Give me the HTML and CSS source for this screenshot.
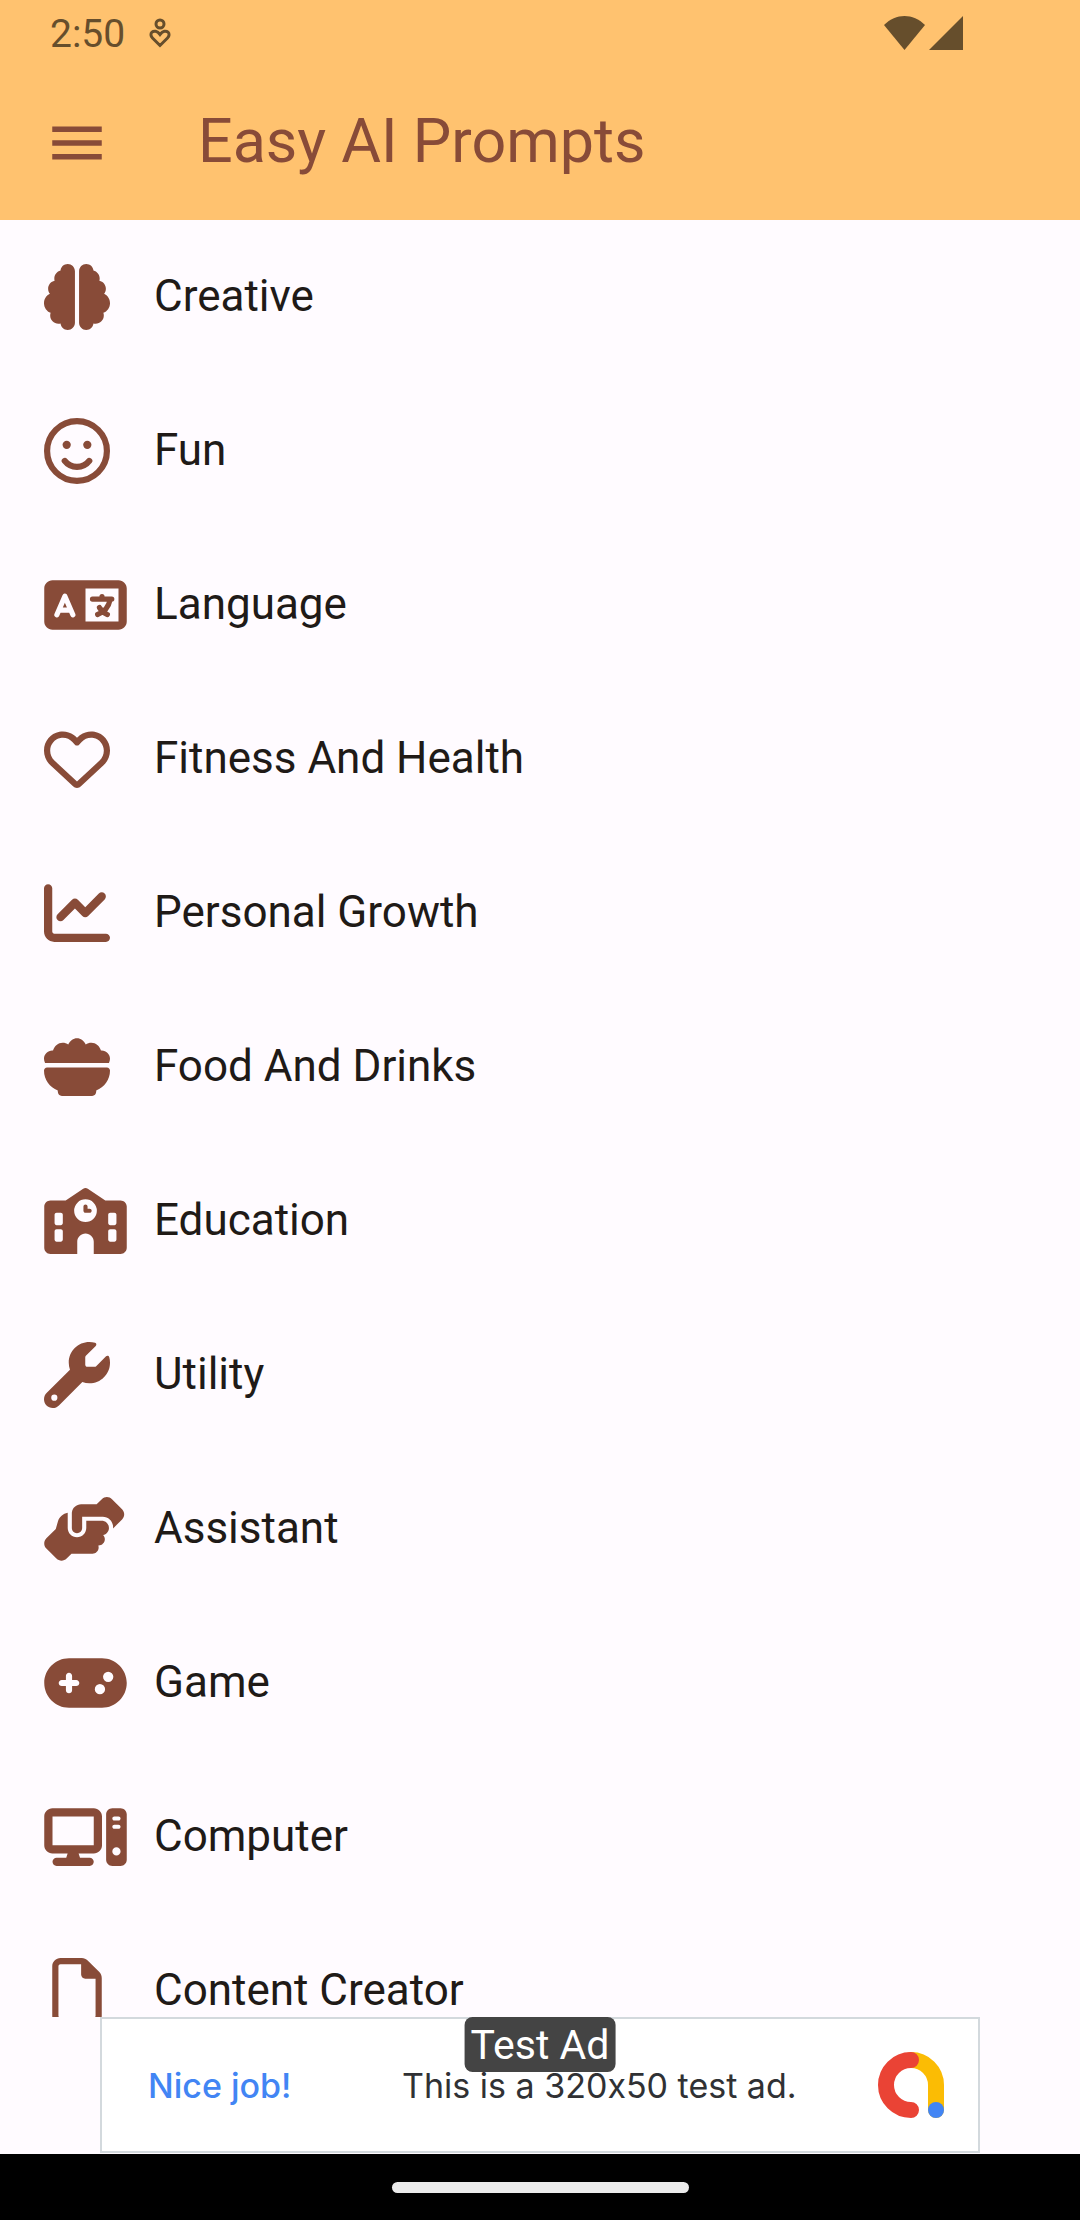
FILE: index.html
```
<!DOCTYPE html>
<html lang="en">
<head>
    <meta charset="UTF-8">
    <meta name="viewport" content="width=device-width, initial-scale=1.0">
    <title>Easy AI Prompts</title>
    <link rel="stylesheet" href="styles.css">
</head>
<body>

<header>
    <div class="status-bar">
        <span class="clock">2:50</span>
        <svg class="status-heart" viewBox="0 0 22 30" aria-hidden="true">
            <circle cx="11" cy="6" r="4"/>
            <path d="M11 27.500L3.500 20C1.500 18 1.500 15.500 3 14.200C5 12.500 8 12.800 11 16.500C14 12.800 17 12.500 19 14.200C20.500 15.500 20.500 18 18.500 20Z"/>
        </svg>
        <div class="signals">
            <svg class="wifi" viewBox="0 0 41 34" aria-hidden="true"><path d="M0 9C12-3 29-3 41 9L20.500 34Z"/></svg>
            <svg class="cell" viewBox="0 0 34 34" aria-hidden="true"><path d="M34 0V34H0Z"/></svg>
        </div>
    </div>
    <div class="app-bar">
        <button class="menu-button" type="button" aria-label="Open menu">
            <svg class="icon" viewBox="0 0 24 24"><path d="M3 18h18v-2H3v2zm0-5h18v-2H3v2zm0-7v2h18V6H3z"/></svg>
        </button>
        <h1>Easy AI Prompts</h1>
    </div>
</header>

<main>
    <ul class="category-list">
        <li><a href="#creative">
            <span class="leading"><svg class="icon" viewBox="0 0 512 512"><path d="M184 0c30.900 0 56 25.100 56 56V456c0 30.900-25.100 56-56 56c-28.900 0-52.700-21.900-55.700-50.100c-5.200 1.400-10.700 2.100-16.300 2.100c-35.300 0-64-28.700-64-64c0-7.400 1.300-14.600 3.600-21.200C21.400 367.400 0 338.200 0 304c0-31.900 18.700-59.500 45.800-72.300C37.100 220.800 32 207 32 192c0-30.700 21.600-56.300 50.400-62.600C80.800 123.900 80 118 80 112c0-29.900 20.600-55.100 48.300-62.100C131.300 21.900 155.100 0 184 0zM328 0c28.900 0 52.600 21.900 55.700 49.900c27.800 7 48.300 32.100 48.300 62.100c0 6-.8 11.900-2.400 17.400c28.800 6.200 50.400 31.900 50.400 62.600c0 15-5.100 28.800-13.800 39.700C493.300 244.500 512 272.100 512 304c0 34.200-21.400 63.400-51.600 74.800c2.300 6.600 3.600 13.800 3.600 21.200c0 35.300-28.700 64-64 64c-5.600 0-11.100-.7-16.300-2.100c-3 28.200-26.800 50.100-55.700 50.100c-30.900 0-56-25.100-56-56V56c0-30.900 25.100-56 56-56z"/></svg></span>
            <span class="label">Creative</span>
        </a></li>
        <li><a href="#fun">
            <span class="leading"><svg class="icon" viewBox="0 0 512 512">
                <circle class="line" cx="256" cy="256" r="232"/>
                <circle cx="176" cy="208" r="32"/>
                <circle cx="336" cy="208" r="32"/>
                <path class="line" d="M161 333c20 26 54 46 95 46s75-20 95-46"/>
            </svg></span>
            <span class="label">Fun</span>
        </a></li>
        <li><a href="#language">
            <span class="leading"><svg class="icon icon-wide" viewBox="0 0 640 512">
                <path fill-rule="evenodd" d="M64 64H576c35.300 0 64 28.700 64 64V384c0 35.300-28.700 64-64 64H64c-35.300 0-64-28.700-64-64V128c0-35.300 28.700-64 64-64zM320 128V384H576V128z"/>
                <path class="cutout" d="M98 332L160 188L222 332M122 296h76"/>
                <path class="line thin" d="M448 190v16M374 210h150M512 212c-10 50-42 98-98 118M428 276c14 24 34 42 62 54"/>
            </svg></span>
            <span class="label">Language</span>
        </a></li>
        <li><a href="#fitness-and-health">
            <span class="leading"><svg class="icon" viewBox="0 0 512 512"><path d="M225.800 468.200l-2.500-2.300L48.100 303.200C17.400 274.700 0 234.700 0 192.800v-3.300c0-70.400 50-130.800 119.200-144C158.600 37.900 198.900 47 231 69.600c9 6.400 17.400 13.800 25 22.300c4.200-4.800 8.700-9.200 13.500-13.300c3.700-3.200 7.500-6.200 11.500-9C313.100 47 353.400 37.900 392.800 45.400C462 58.600 512 119.100 512 189.500v3.300c0 41.900-17.400 81.900-48.100 110.400L288.700 465.900l-2.500 2.300c-8.200 7.600-19 11.900-30.200 11.900s-22-4.200-30.200-11.900zM239.100 145c-.4-.3-.7-.7-1-1.100l-17.900-20.100c-23.100-25.900-58-37.700-92-31.200C81.600 101.500 48 142.100 48 189.500v3.300c0 28.500 11.900 55.800 32.800 75.200L256 430.700 431.200 268c20.900-19.400 32.800-46.700 32.800-75.200v-3.300c0-47.300-33.600-88-80.100-96.900c-34-6.500-69 5.400-92 31.200l-18 20.200c-.3 .4-.7 .7-1 1.100c-4.500 4.500-10.600 7-16.900 7s-12.400-2.500-16.900-7z"/></svg></span>
            <span class="label">Fitness And Health</span>
        </a></li>
        <li><a href="#personal-growth">
            <span class="leading"><svg class="icon" viewBox="0 0 512 512"><path d="M64 64c0-17.700-14.300-32-32-32S0 46.300 0 64V400c0 44.200 35.800 80 80 80H480c17.700 0 32-14.300 32-32s-14.300-32-32-32H80c-8.800 0-16-7.200-16-16V64zm406.600 86.600c12.500-12.500 12.500-32.800 0-45.300s-32.800-12.500-45.300 0L320 210.700l-57.400-57.400c-12.500-12.500-32.800-12.500-45.300 0l-112 112c-12.500 12.500-12.500 32.800 0 45.300s32.800 12.500 45.300 0L240 221.300l57.400 57.400c12.500 12.500 32.800 12.500 45.300 0l128-128z"/></svg></span>
            <span class="label">Personal Growth</span>
        </a></li>
        <li><a href="#food-and-drinks">
            <span class="leading"><svg class="icon" viewBox="0 0 512 512">
                <path d="M0 192c0-35 29-64 64-64h6C80 94 111 68 144 68c18 0 32 5 44 13C201 53 227 32 256 32s55 21 68 49c12-8 26-13 44-13c33 0 64 26 74 60h6c35 0 64 29 64 64c0 11-3 22-8 32H8c-5-10-8-21-8-32z"/>
                <path d="M0 284c0-13 10-24 24-24H488c14 0 24 11 24 24c0 72-44 132-107 154v10c0 18-14 32-32 32H139c-18 0-32-14-32-32v-10C44 416 0 356 0 284z"/>
            </svg></span>
            <span class="label">Food And Drinks</span>
        </a></li>
        <li><a href="#education">
            <span class="leading"><svg class="icon icon-wide" viewBox="0 0 640 512"><path fill-rule="evenodd" d="M337.800 5.400C327-1.800 313-1.800 302.200 5.400L166.300 96H48C21.500 96 0 117.500 0 144V464c0 26.500 21.500 48 48 48H256V416c0-35.300 28.700-64 64-64s64 28.700 64 64v96H592c26.500 0 48-21.500 48-48V144c0-26.500-21.500-48-48-48H473.700L337.800 5.400zM96 192h32c8.800 0 16 7.200 16 16v64c0 8.800-7.200 16-16 16H96c-8.800 0-16-7.200-16-16V208c0-8.800 7.200-16 16-16zm400 16c0-8.800 7.200-16 16-16h32c8.800 0 16 7.200 16 16v64c0 8.800-7.200 16-16 16H512c-8.800 0-16-7.200-16-16V208zM96 320h32c8.800 0 16 7.200 16 16v64c0 8.800-7.200 16-16 16H96c-8.800 0-16-7.200-16-16V336c0-8.800 7.200-16 16-16zm400 16c0-8.800 7.200-16 16-16h32c8.800 0 16 7.200 16 16v64c0 8.800-7.200 16-16 16H512c-8.800 0-16-7.200-16-16V336zM232 176a88 88 0 1 1 176 0 88 88 0 1 1 -176 0zm88-48c-8.800 0-16 7.200-16 16v32c0 8.800 7.200 16 16 16h32c8.800 0 16-7.200 16-16s-7.200-16-16-16H336V144c0-8.800-7.200-16-16-16z"/></svg></span>
            <span class="label">Education</span>
        </a></li>
        <li><a href="#utility">
            <span class="leading"><svg class="icon" viewBox="0 0 512 512"><path fill-rule="evenodd" d="M352 320c88.400 0 160-71.600 160-160c0-15.300-2.200-30.100-6.200-44.200c-3.100-10.800-16.400-13.200-24.300-5.300l-76.800 76.800c-3 3-7.100 4.700-11.300 4.700H336c-8.800 0-16-7.200-16-16V118.600c0-4.200 1.700-8.300 4.700-11.300l76.800-76.800c7.900-7.900 5.400-21.200-5.300-24.300C382.100 2.200 367.300 0 352 0C263.600 0 192 71.600 192 160c0 19.100 3.400 37.500 9.500 54.500L19.900 396.100C7.200 408.800 0 426.100 0 444.100C0 481.600 30.400 512 67.900 512c18 0 35.300-7.200 48-19.900L297.500 310.500c17 6.200 35.400 9.500 54.500 9.500zM80 408a24 24 0 1 1 0 48 24 24 0 1 1 0-48z"/></svg></span>
            <span class="label">Utility</span>
        </a></li>
        <li><a href="#assistant">
            <span class="leading"><svg class="icon icon-wide" viewBox="10 0 640 512"><path d="M544 248v3.300l69.700-69.700c21.900-21.900 21.900-57.300 0-79.200L535.600 24.400c-21.900-21.900-57.300-21.900-79.200 0L416.300 64.500c-2.700-.3-5.500-.5-8.300-.5H296c-37.100 0-67.600 28-71.600 64H224V248c0 22.100 17.900 40 40 40s40-17.900 40-40V160H464c44.200 0 80 35.800 80 80v8zM336 192v56c0 39.800-32.200 72-72 72s-72-32.200-72-72V129.400c-35.900 6.200-65.800 32.300-76 68.200L99.500 255.200 26.300 328.400c-21.900 21.900-21.900 57.300 0 79.200l78.100 78.100c21.900 21.900 57.300 21.900 79.200 0l37.700-37.700c.9 0 1.800 .1 2.700 .1H384c26.500 0 48-21.500 48-48c0-5.600-1-11-2.700-16H432c26.500 0 48-21.500 48-48c0-12.800-5-24.400-13.200-33c25.700-5 45.100-27.600 45.200-54.800v-.4c-.1-30.800-25.100-55.800-56-55.800l-120 0z"/></svg></span>
            <span class="label">Assistant</span>
        </a></li>
        <li><a href="#game">
            <span class="leading"><svg class="icon icon-wide" viewBox="0 0 640 512"><path fill-rule="evenodd" d="M192 64C86 64 0 150 0 256S86 448 192 448H448c106 0 192-86 192-192s-86-192-192-192H192zM496 168a40 40 0 1 1 0 80 40 40 0 1 1 0-80zM392 304a40 40 0 1 1 80 0 40 40 0 1 1 -80 0zM168 200c0-13.300 10.700-24 24-24s24 10.700 24 24v32h32c13.300 0 24 10.700 24 24s-10.700 24-24 24H216v32c0 13.300-10.700 24-24 24s-24-10.700-24-24V280H136c-13.300 0-24-10.700-24-24s10.700-24 24-24h32V200z"/></svg></span>
            <span class="label">Game</span>
        </a></li>
        <li><a href="#computer">
            <span class="leading"><svg class="icon icon-wide" viewBox="0 0 640 512"><path fill-rule="evenodd" d="M384 96V320H64L64 96H384zM64 32C28.700 32 0 60.700 0 96V320c0 35.300 28.700 64 64 64H181.300l-10.700 32H96c-17.700 0-32 14.300-32 32s14.300 32 32 32H352c17.700 0 32-14.300 32-32s-14.300-32-32-32H277.300l-10.700-32H384c35.300 0 64-28.700 64-64V96c0-35.300-28.700-64-64-64H64zm464 0c-26.500 0-48 21.500-48 48V432c0 26.500 21.500 48 48 48h64c26.500 0 48-21.500 48-48V80c0-26.500-21.500-48-48-48H528zm16 64h32c8.800 0 16 7.200 16 16s-7.200 16-16 16H544c-8.800 0-16-7.200-16-16s7.200-16 16-16zm-16 80c0-8.800 7.200-16 16-16h32c8.800 0 16 7.200 16 16s-7.200 16-16 16H544c-8.800 0-16-7.200-16-16zm32 160a32 32 0 1 1 0 64 32 32 0 1 1 0-64z"/></svg></span>
            <span class="label">Computer</span>
        </a></li>
        <li><a href="#content-creator">
            <span class="leading"><svg class="icon" viewBox="0 0 384 512"><path fill-rule="evenodd" d="M320 464c8.800 0 16-7.200 16-16V160H256c-17.700 0-32-14.300-32-32V48H64c-8.800 0-16 7.200-16 16V448c0 8.800 7.200 16 16 16H320zM0 64C0 28.700 28.700 0 64 0H229.500c17 0 33.300 6.700 45.300 18.700l90.500 90.500c12 12 18.700 28.300 18.700 45.300V448c0 35.300-28.700 64-64 64H64c-35.300 0-64-28.700-64-64V64z"/></svg></span>
            <span class="label">Content Creator</span>
        </a></li>
    </ul>
</main>

<footer>
    <a class="ad-banner" href="#ad">
        <span class="ad-badge">Test Ad</span>
        <span class="ad-praise">Nice job!</span>
        <span class="ad-text">This is a 320x50 test ad.</span>
        <svg class="ad-logo" viewBox="0 0 66 66" aria-hidden="true">
            <path class="yellow" d="M33 8A25 25 0 0 1 58 33V58"/>
            <path class="red" d="M33 8A25 25 0 0 0 33 58"/>
            <circle cx="58" cy="58" r="8"/>
        </svg>
    </a>
    <div class="gesture-bar"><div class="pill"></div></div>
</footer>

</body>
</html>
```

FILE: styles.css
```
* {
    box-sizing: border-box;
}
body {
    font-family: Roboto, sans-serif;
    margin: 0;
    height: 100vh;
    display: flex;
    flex-direction: column;
    background-color: #fffbff;
    color: #201a17;
}
header {
    background-color: #ffc26f;
}

/* status bar */
.status-bar {
    height: 66px;
    padding: 0 117px 0 50px;
    display: flex;
    align-items: center;
    color: #664e2c;
}
.clock {
    padding-top: 2px;
    font-size: 39px;
}
.status-heart {
    width: 22px;
    height: 30px;
    margin-left: 24px;
    fill: none;
    stroke: currentColor;
    stroke-width: 3;
}
.signals {
    margin-left: auto;
    display: flex;
    gap: 4px;
}
.signals svg {
    height: 34px;
    fill: currentColor;
}
.wifi {
    width: 41px;
}
.cell {
    width: 34px;
}

/* app bar */
.app-bar {
    height: 154px;
    padding: 0 44px;
    display: flex;
    align-items: center;
    gap: 88px;
    color: #884b38;
}
.menu-button {
    padding: 0;
    border: none;
    background: none;
    color: inherit;
    cursor: pointer;
}
h1 {
    margin: 0;
    padding-bottom: 4px;
    font-size: 61px;
    font-weight: 400;
}
.icon {
    display: block;
    width: 66px;
    height: 66px;
    fill: currentColor;
}
.icon-wide {
    width: 83px;
}

/* category list */
main {
    flex: 1;
    min-height: 0;
    overflow: hidden;
}
.category-list {
    list-style: none;
    margin: 0;
    padding: 0;
}
.category-list a {
    display: flex;
    align-items: center;
    height: 154px;
    padding: 0 44px;
    font-size: 44px;
    color: inherit;
    text-decoration: none;
}
.leading {
    width: 110px;
    color: #884b38;
}
.label {
    padding-bottom: 2px;
}
.line {
    fill: none;
    stroke: currentColor;
    stroke-width: 48;
    stroke-linecap: round;
    stroke-linejoin: round;
}
.thin {
    stroke-width: 40;
}
.cutout {
    fill: none;
    stroke: #fffbff;
    stroke-width: 40;
    stroke-linecap: round;
    stroke-linejoin: round;
}

/* ad banner */
.ad-banner {
    position: relative;
    max-width: 880px;
    height: 136px;
    margin: 0 auto 1px;
    padding: 0 34px 0 46px;
    display: flex;
    align-items: center;
    border: 2px solid #d3d9dd;
    background-color: #fff;
    font-family: Inter, sans-serif;
    font-size: 34px;
    /* keeps the x in 320x50 a plain letter */
    font-feature-settings: "calt" 0;
    color: #303134;
    text-decoration: none;
}
.ad-badge {
    position: absolute;
    top: -2px;
    left: 50%;
    transform: translateX(-50%);
    padding: 2px 6px 0;
    border-radius: 8px;
    background-color: #444;
    color: #fff;
    font-family: Roboto, sans-serif;
    font-size: 41px;
    line-height: 53px;
    white-space: nowrap;
}
.ad-praise {
    width: 254px;
    font-weight: 500;
    color: #4285f4;
}
.ad-logo {
    width: 66px;
    height: 66px;
    margin-left: auto;
    fill: #4285f4;
}
.ad-logo path {
    fill: none;
    stroke-width: 16;
    stroke-linecap: round;
}
.ad-logo .yellow {
    stroke: #fbbc04;
}
.ad-logo .red {
    stroke: #ea4335;
}

/* gesture bar */
.gesture-bar {
    height: 66px;
    display: flex;
    align-items: center;
    justify-content: center;
    background-color: #000;
}
.pill {
    width: 297px;
    height: 11px;
    border-radius: 6px;
    background-color: #ebebeb;
}
```
